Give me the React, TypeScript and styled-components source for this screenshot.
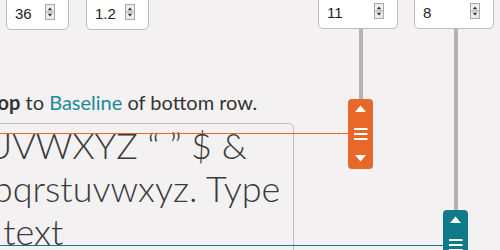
import React from "react";
import styled, { createGlobalStyle } from "styled-components";

const GlobalStyle = createGlobalStyle`
  html, body { margin: 0; padding: 0; background: #f3f1f1; }
  body { overflow: hidden; }
`;

const ORANGE = "#e8682a";
const TEAL = "#0f7b8a";

const Page = styled.div`
  position: relative;
  width: 500px;
  height: 250px;
  overflow: hidden;
  display: flex;
  align-items: flex-start;
  background: #f3f1f1;
`;

const LeftPane = styled.div`
  flex: 0 0 294px;
  display: flex;
  flex-direction: column;
  min-width: 0;
`;

const InputsRow = styled.div`
  display: flex;
  gap: 17px;
  padding-left: 6px;
  margin-top: -6px;
`;

const Field = styled.div<{ $w: number }>`
  box-sizing: border-box;
  width: ${(p) => p.$w}px;
  height: 36px;
  display: flex;
  align-items: center;
  justify-content: space-between;
  padding: 0 13px 0 8px;
  background: #fff;
  border: 1px solid #bdbdbd;
  border-radius: 5px;
`;

const Value = styled.span`
  padding-top: 2px;
  font: 15px "Liberation Sans", Arial, sans-serif;
  color: #1e1e1e;
`;

const Caption = styled.p`
  margin: 60px 0 0 -12px;
  font: 20px/24px Lato, "Noto Sans", sans-serif;
  color: #333;
  white-space: nowrap;
`;

const Strong = styled.b`
  font-weight: 700;
`;

const Link = styled.span`
  color: #1a8a9a;
`;

const TextBox = styled.div`
  box-sizing: border-box;
  margin: 9px 0 0 -90px;
  width: 384px;
  height: 200px;
  padding: 0 0 0 13px;
  border: 1px solid #bdbdbd;
  border-radius: 5px;
  font: 300 36px/1.2 Lato, "Noto Sans", sans-serif;
  color: #3a3a3a;
`;

const Line = styled.div`
  white-space: pre;
`;

const SliderCol = styled.div<{ $gap: number }>`
  flex: 0 0 80px;
  margin-left: ${(p) => p.$gap}px;
  margin-top: -7px;
  display: flex;
  flex-direction: column;
`;

const Rail = styled.div<{ $x: number }>`
  width: 25px;
  margin-left: ${(p) => p.$x}px;
  display: flex;
  flex-direction: column;
  align-items: center;
`;

const Stem = styled.div<{ $len: number }>`
  width: 4px;
  height: ${(p) => p.$len}px;
  background: #b4b4b4;
`;

const Handle = styled.div<{ $color: string }>`
  position: relative;
  z-index: 2;
  width: 25px;
  height: 70px;
  border-radius: 4px;
  background: ${(p) => p.$color};
`;

const Guide = styled.div<{ $color: string; $top: number }>`
  position: absolute;
  right: 100%;
  top: ${(p) => p.$top}px;
  width: 500px;
  height: 0;
  border-top: 1px solid ${(p) => p.$color};
`;

const Spinner = () => (
  <svg width="10" height="16" viewBox="0 0 10 16">
    <rect x="0.5" y="0.5" width="9" height="15" fill="#ececec" stroke="#a9a9a9" />
    <line x1="1" x2="9" y1="8" y2="8" stroke="#a9a9a9" />
    <path d="M2.8 6.2h4.4L5 3.4z" fill="#333" />
    <path d="M2.8 9.8h4.4L5 12.6z" fill="#333" />
  </svg>
);

const HandleGlyphs = () => (
  <svg width="25" height="70" viewBox="0 0 25 70">
    <path d="M7 13h11L12.5 6.5z" fill="#fff" />
    <rect x="6" y="29" width="13.5" height="2" fill="#fff" />
    <rect x="6" y="34" width="13.5" height="2" fill="#fff" />
    <rect x="6" y="39" width="13.5" height="2" fill="#fff" />
    <path d="M7 56h11L12.5 62.5z" fill="#fff" />
  </svg>
);

const NumberField = ({ w, value }: { w: number; value: string }) => (
  <Field $w={w}>
    <Value>{value}</Value>
    <Spinner />
  </Field>
);

const Slider = ({
  gap,
  x,
  value,
  len,
  color,
  guideTop,
}: {
  gap: number;
  x: number;
  value: string;
  len: number;
  color: string;
  guideTop: number;
}) => (
  <SliderCol $gap={gap}>
    <NumberField w={80} value={value} />
    <Rail $x={x}>
      <Stem $len={len} />
      <Handle $color={color}>
        <Guide $color={color} $top={guideTop} />
        <HandleGlyphs />
      </Handle>
    </Rail>
  </SliderCol>
);

export default function App() {
  return (
    <>
      <GlobalStyle />
      <Page>
        <LeftPane>
          <InputsRow>
            <NumberField w={63} value="36" />
            <NumberField w={63} value="1.2" />
          </InputsRow>
          <Caption>
            <Strong>Top</Strong> to <Link>Baseline</Link> of bottom row.
          </Caption>
          <TextBox>
            <Line>RSTUVWXYZ “ ” $ &amp;</Line>
            <Line>mnopqrstuvwxyz. Type</Line>
            <Line>your text</Line>
          </TextBox>
        </LeftPane>
        <Slider gap={24} x={30} value="11" len={70} color={ORANGE} guideTop={34} />
        <Slider gap={16} x={29} value="8" len={181} color={TEAL} guideTop={35} />
      </Page>
    </>
  );
}
